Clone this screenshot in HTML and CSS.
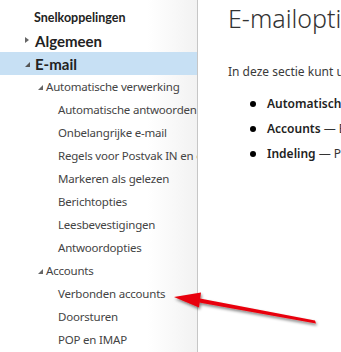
FILE: index.html
```html
<!DOCTYPE html>
<html lang="nl">
<head>
<meta charset="utf-8">
<title>E-mailopties</title>
<link rel="stylesheet" href="styles.css">
</head>
<body>
<div class="page">
  <nav class="sidebar">
    <div class="row l0 head">Snelkoppelingen</div>
    <div class="row l0"><span class="tri closed"></span>Algemeen</div>
    <div class="row l0 selected"><span class="tri open"></span>E-mail</div>
    <div class="row l1"><span class="tri open small"></span>Automatische verwerking</div>
    <div class="row l2">Automatische antwoorden</div>
    <div class="row l2">Onbelangrijke e-mail</div>
    <div class="row l2">Regels voor Postvak IN en opruimen</div>
    <div class="row l2">Markeren als gelezen</div>
    <div class="row l2">Berichtopties</div>
    <div class="row l2">Leesbevestigingen</div>
    <div class="row l2">Antwoordopties</div>
    <div class="row l1"><span class="tri open small"></span>Accounts</div>
    <div class="row l2">Verbonden accounts</div>
    <div class="row l2">Doorsturen</div>
    <div class="row l2">POP en IMAP</div>
  </nav>
  <main class="content">
    <h1 class="title">E-mailopties</h1>
    <p class="intro">In deze sectie kunt u uw e-mailinstellingen wijzigen.</p>
    <ul class="list">
      <li><b>Automatische verwerking</b> — Regels en automatische antwoorden</li>
      <li><b>Accounts</b> — Beheer verbonden accounts</li>
      <li><b>Indeling</b> — Pas de indeling aan</li>
    </ul>
  </main>
</div>
<svg class="arrow" width="341" height="352" viewBox="0 0 341 352">
  <defs>
    <filter id="sh" x="-20%" y="-50%" width="140%" height="200%">
      <feGaussianBlur in="SourceAlpha" stdDeviation="1.5"/>
      <feOffset dx="1" dy="2" result="b"/>
      <feComponentTransfer><feFuncA type="linear" slope="0.5"/></feComponentTransfer>
      <feMerge><feMergeNode/><feMergeNode in="SourceGraphic"/></feMerge>
    </filter>
  </defs>
  <g filter="url(#sh)">
    <polygon points="315,320.5 316,323.5 199,302.5 200,298.5" fill="#e8000b"/>
    <polygon points="174,297 201,292.5 199,307.5" fill="#e8000b"/>
  </g>
</svg>
</body>
</html>
```
FILE: styles.css
```css
html, body {
  margin: 0;
  padding: 0;
  background: #fff;
}
body {
  font-family: "Noto Sans", "Open Sans", sans-serif;
  color: #333;
  width: 341px;
  height: 352px;
  overflow: hidden;
  position: relative;
}
.page {
  display: flex;
  height: 352px;
}
.sidebar {
  width: 198px;
  flex: none;
  padding-top: 6px;
  box-sizing: border-box;
  background: linear-gradient(to right, #ffffff 0%, #ffffff 75%, #f2f2f2 100%);
  border-right: 1px solid #c6c6c6;
  overflow: hidden;
  font-family: "Noto Sans", "Open Sans", sans-serif;
}
.row {
  height: 23px;
  display: flex;
  align-items: center;
  white-space: nowrap;
  font-size: 11.5px;
  letter-spacing: -0.2px;
  color: #444;
}
.row.l0 {
  padding-left: 24px;
  font-family: "Lato", "Noto Sans", sans-serif;
  font-size: 15px;
  letter-spacing: 0;
  font-weight: 700;
  color: #222;
}
.row.head {
  padding-left: 34px;
  font-size: 12.5px;
}
.row.l1 {
  padding-left: 37px;
}
.row.l2 {
  padding-left: 58px;
}
.row.selected {
  background: #c7e0f4;
}
.tri {
  display: inline-block;
  width: 11px;
  height: 10px;
  position: relative;
  flex: none;
}
.tri.closed::before {
  content: "";
  position: absolute;
  left: 1px;
  top: 1px;
  border-left: 4px solid #666;
  border-top: 3.5px solid transparent;
  border-bottom: 3.5px solid transparent;
}
.tri.open::before {
  content: "";
  position: absolute;
  left: 1px;
  top: 3px;
  border-right: 5px solid #555;
  border-top: 5px solid transparent;
}
.tri.small {
  width: 9px;
}
.tri.small::before {
  left: 1px;
  top: 3px;
  border-right-width: 5px;
  border-top-width: 5px;
  border-right-color: #666;
}
.content {
  flex: 1;
  padding-left: 30px;
  overflow: hidden;
  white-space: nowrap;
}
.title {
  margin: 3px 0 0;
  font-size: 25px;
  font-weight: 300;
  color: #333;
  line-height: 30px;
}
.intro {
  margin: 31px 0 0;
  font-size: 12px;
  line-height: 16px;
  color: #3a3a3a;
}
.list {
  margin: 16px 0 0;
  padding-left: 39px;
  font-size: 12px;
  line-height: 16px;
  list-style: none;
}
.list li {
  position: relative;
  margin-bottom: 9px;
  color: #333;
}
.list li::before {
  content: "";
  position: absolute;
  left: -17px;
  top: 5px;
  width: 6px;
  height: 6px;
  border-radius: 50%;
  background: #000;
}
.list b {
  font-weight: 600;
  color: #222;
}
.arrow {
  position: absolute;
  left: 0;
  top: 0;
  pointer-events: none;
}
```
